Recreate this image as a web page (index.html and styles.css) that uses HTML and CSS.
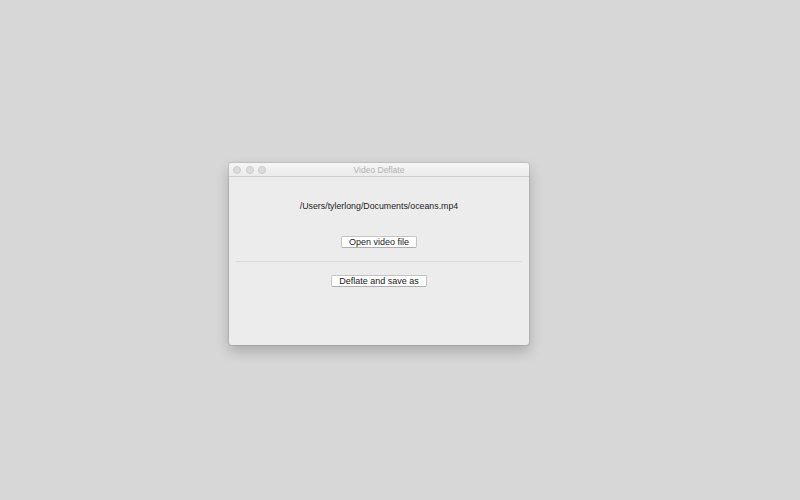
FILE: index.html
```html
<!DOCTYPE html>
<html lang="en">
  <head>
    <meta charset="UTF-8" />
    <title>Video Deflate</title>
    <link rel="stylesheet" href="styles.css">
  </head>
  <body>
    <div class="desktop">
      <div class="window">
        <div class="titlebar">
          <div class="lights">
            <span class="light"></span>
            <span class="light"></span>
            <span class="light"></span>
          </div>
          <div class="title">Video Deflate</div>
        </div>
        <div class="content">
          <p class="path">/Users/tylerlong/Documents/oceans.mp4</p>
          <button class="btn open">Open video file</button>
          <hr class="sep" />
          <button class="btn">Deflate and save as</button>
        </div>
      </div>
    </div>
  </body>
</html>
```

FILE: styles.css
```css
* {
  margin: 0;
  padding: 0;
  box-sizing: border-box;
}
html, body {
  width: 800px;
  height: 500px;
  background: #d7d7d7;
  overflow: hidden;
  font-family: "Liberation Sans", Arial, sans-serif;
}
.desktop {
  padding: 163px 0 0 229px;
}
.window {
  width: 300px;
  height: 182px;
  background: #ececec;
  border-radius: 3px;
  box-shadow: 0 0 0 1px rgba(0, 0, 0, 0.08), 0 6px 14px rgba(0, 0, 0, 0.22);
  display: flex;
  flex-direction: column;
  overflow: hidden;
}
.titlebar {
  position: relative;
  height: 14px;
  background: linear-gradient(#f6f6f6, #ebebeb);
  border-bottom: 1px solid #d0d0d0;
  display: flex;
  align-items: center;
  justify-content: center;
}
.lights {
  position: absolute;
  left: 4px;
  top: 3px;
  display: flex;
  gap: 4.5px;
}
.light {
  width: 8px;
  height: 8px;
  border-radius: 50%;
  background: #dcdcdc;
  border: 1px solid #cbcbcb;
}
.title {
  font-size: 8.5px;
  color: #b2b2b2;
}
.content {
  flex: 1;
  display: flex;
  flex-direction: column;
  align-items: center;
  padding: 23px 7px 0;
}
.path {
  font-size: 8.8px;
  color: #222;
  line-height: 12px;
}
.btn {
  font-family: "Liberation Sans", Arial, sans-serif;
  font-size: 9px;
  color: #222;
  background: #fff;
  border: 1px solid #c4c4c4;
  border-bottom-color: #aeaeae;
  border-radius: 2px;
  height: 12px;
  padding: 0 7px;
  line-height: 10px;
}
.open {
  margin-top: 24px;
}
.sep {
  align-self: stretch;
  border: 0;
  border-top: 1px solid #dadada;
  margin: 13px 0 13px;
}
```
